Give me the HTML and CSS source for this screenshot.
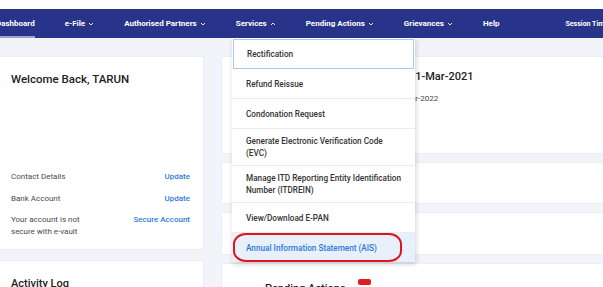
FILE: index.html
```html
<!DOCTYPE html>
<html>
<head>
<meta charset="utf-8">
<link rel="stylesheet" href="styles.css">
</head>
<body>
<div class="topstrip"></div>
<nav class="nav">
  <span class="nav-item active first">Dashboard</span>
  <span class="nav-item">e-File <svg class="chev" viewBox="0 0 6 4"><path d="M1 1l2 2 2-2"/></svg></span>
  <span class="nav-item">Authorised Partners <svg class="chev" viewBox="0 0 6 4"><path d="M1 1l2 2 2-2"/></svg></span>
  <span class="nav-item">Services <svg class="chev" viewBox="0 0 6 4"><path d="M1 3l2-2 2 2"/></svg></span>
  <span class="nav-item">Pending Actions <svg class="chev" viewBox="0 0 6 4"><path d="M1 1l2 2 2-2"/></svg></span>
  <span class="nav-item">Grievances <svg class="chev" viewBox="0 0 6 4"><path d="M1 1l2 2 2-2"/></svg></span>
  <span class="nav-item">Help</span>
  <span class="nav-session">Session Time</span>
</nav>
<div class="main">
  <div class="left">
    <div class="card welcome">
      <h2 class="welcome-title">Welcome Back, TARUN</h2>
      <div class="info-rows">
        <div class="info-row"><span>Contact Details</span><a class="link">Update</a></div>
        <div class="info-row"><span>Bank Account</span><a class="link">Update</a></div>
        <div class="info-row"><span class="wrap">Your account is not secure with e-vault</span><a class="link">Secure Account</a></div>
      </div>
    </div>
    <div class="card activity">
      <h3 class="activity-title">Activity Log</h3>
    </div>
  </div>
  <div class="center">
    <div class="card c1">
      <div class="date-main">31-Mar-2021</div>
      <div class="date-sub">Mar-2022</div>
    </div>
    <div class="card c2"></div>
    <div class="card c3"></div>
    <div class="card c4">
      <span class="pending-title">Pending Actions</span><span class="badge"></span>
    </div>
  </div>
</div>
<div class="dropdown">
  <div class="dd-item focus">Rectification</div>
  <div class="dd-item">Refund Reissue</div>
  <div class="dd-item">Condonation Request</div>
  <div class="dd-item double">Generate Electronic Verification Code<br>(EVC)</div>
  <div class="dd-item double">Manage ITD Reporting Entity Identification<br>Number (ITDREIN)</div>
  <div class="dd-item">View/Download E-PAN</div>
  <div class="dd-item selected">Annual Information Statement (AIS)</div>
  <div class="highlight"></div>
</div>
</body>
</html>
```
FILE: styles.css
```css
html, body {
  margin: 0;
  padding: 0;
}
body {
  background: #f3f4f9;
  font-family: Roboto, "Noto Sans", sans-serif;
  color: #333;
  width: 603px;
  height: 287px;
  overflow: hidden;
  position: relative;
}
.topstrip {
  height: 9px;
  background: #fff;
}
.nav {
  height: 29px;
  background: #28348a;
  display: flex;
  align-items: center;
  color: #fff;
  font-size: 8px;
  font-weight: 700;
  gap: 30px;
  white-space: nowrap;
  box-sizing: border-box;
}
.nav-item {
  display: flex;
  align-items: center;
  gap: 3px;
  height: 100%;
  box-sizing: border-box;
}
.nav-item.first {
  margin-left: -4px;
}
.nav-item.active {
  border-bottom: 2px solid rgba(255,255,255,0.55);
  padding-top: 2px;
}
.chev {
  width: 6px;
  height: 4px;
  fill: none;
  stroke: #fff;
  stroke-width: 0.9;
}
.nav-session {
  margin-left: 36px;
  font-size: 7px;
}
.main {
  display: flex;
  gap: 19px;
  padding-top: 19px;
}
.card {
  background: #fff;
  box-shadow: 0 0 2px rgba(0,0,0,0.08);
}
.left {
  width: 203px;
  flex: none;
  display: flex;
  flex-direction: column;
  gap: 12px;
}
.welcome {
  height: 192px;
  box-sizing: border-box;
  padding: 15px 13px 0 11px;
  display: flex;
  flex-direction: column;
}
.welcome-title {
  margin: 0;
  font-size: 11.5px;
  font-weight: 500;
  color: #222;
  line-height: 14px;
}
.info-rows {
  margin-top: 85px;
  display: flex;
  flex-direction: column;
  gap: 9.5px;
  font-size: 8px;
  line-height: 12px;
  color: #4a4a4a;
}
.info-row {
  display: flex;
  justify-content: space-between;
  align-items: flex-start;
}
.wrap {
  width: 90px;
}
.link {
  color: #2f7ae0;
  font-weight: 500;
}
.activity {
  height: 60px;
  padding: 16px 11px 0;
  box-sizing: border-box;
}
.activity-title {
  margin: 0;
  font-size: 11px;
  font-weight: 500;
  color: #222;
}
.center {
  flex: 1;
  display: flex;
  flex-direction: column;
  gap: 10px;
}
.c1 {
  height: 96px;
  box-sizing: border-box;
  padding: 13px 0 0 187px;
}
.date-main {
  font-size: 11px;
  font-weight: 500;
  color: #222;
  line-height: 14px;
}
.date-sub {
  margin-top: 10px;
  font-size: 8px;
  color: #4a4a4a;
  margin-left: -5px;
}
.c2 { height: 40px; }
.c3 { height: 41px; }
.c4 {
  height: 40px;
  padding: 18px 0 0 43px;
  box-sizing: border-box;
  display: flex;
  align-items: flex-start;
  gap: 12px;
}
.pending-title {
  font-size: 11px;
  font-weight: 500;
  color: #222;
}
.badge {
  display: block;
  width: 13px;
  height: 6px;
  margin-top: -3px;
  background: #e21b23;
  border-radius: 2px;
}
.dropdown {
  position: absolute;
  left: 232px;
  top: 38px;
  width: 183px;
  background: #fff;
  box-shadow: 1px 2px 5px rgba(0,0,0,0.18);
  padding-top: 1px;
  font-size: 8.2px;
  font-weight: 500;
  color: #333;
}
.dd-item {
  min-height: 30px;
  box-sizing: border-box;
  padding: 6px 4px 6px 14px;
  line-height: 12px;
  display: flex;
  align-items: center;
  border-bottom: 1px solid #ececf0;
  white-space: nowrap;
}
.dd-item.double {
  min-height: 37px;
}
.dd-item.focus {
  min-height: 30px;
  border: 1px solid #a9c9ef;
  margin: 0 1px 0 1px;
  padding-left: 13px;
}
.dd-item.selected {
  background: #e7f0fb;
  color: #2d79de;
  border-bottom: none;
  min-height: 29px;
}
.highlight {
  position: absolute;
  left: 1px;
  top: 195px;
  width: 169px;
  height: 29px;
  box-sizing: border-box;
  border: 2px solid #e0141c;
  border-radius: 13px / 11px;
}
```
